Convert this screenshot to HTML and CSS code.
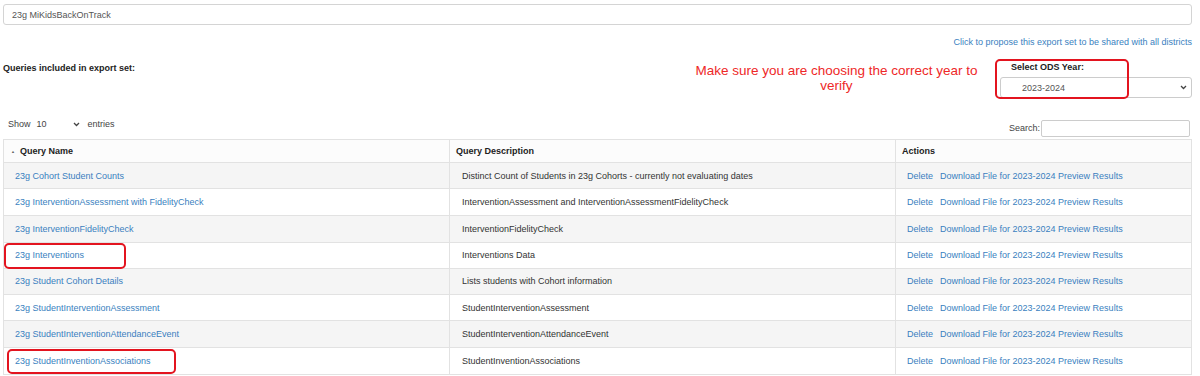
FILE: index.html
```html
<!DOCTYPE html>
<html lang="en">
<head>
    <meta charset="utf-8">
    <title>Export set</title>
    <link rel="stylesheet" href="styles.css">
</head>
<body>
    <div class="page">
        <div class="set-name">23g MiKidsBackOnTrack</div>

        <div class="share-row">
            <a href="#">Click to propose this export set to be shared with all districts</a>
        </div>

        <div class="options-row">
            <div class="included">Queries included in export set:</div>
            <div class="note">Make sure you are choosing the correct year to<br>verify</div>
            <div class="year-pick">
                <div class="year-label">Select ODS Year:</div>
                <div class="year-select">
                    <span>2023-2024</span>
                    <svg class="chev" width="7" height="5" viewBox="0 0 7 5"><path d="M1 1 L3.5 3.5 L6 1" fill="none" stroke="#444" stroke-width="1.3"/></svg>
                </div>
                <div class="mark mark-year"></div>
            </div>
        </div>

        <div class="table-tools">
            <div class="length">
                Show
                <span class="length-select">10
                    <svg class="chev" width="7" height="5" viewBox="0 0 7 5"><path d="M1 1 L3.5 3.5 L6 1" fill="none" stroke="#444" stroke-width="1.3"/></svg>
                </span>
                entries
            </div>
            <div class="search">Search:<span class="search-box"></span></div>
        </div>

        <table class="queries">
            <thead>
                <tr>
                    <th class="col-name"><span class="sort">&#9650;</span>Query Name</th>
                    <th class="col-desc">Query Description</th>
                    <th class="col-act">Actions</th>
                </tr>
            </thead>
            <tbody>
                <tr>
                    <td><a href="#">23g Cohort Student Counts</a></td>
                    <td>Distinct Count of Students in 23g Cohorts - currently not evaluating dates</td>
                    <td><a href="#" class="del">Delete</a><a href="#">Download File for 2023-2024</a> <a href="#">Preview Results</a></td>
                </tr>
                <tr>
                    <td><a href="#">23g InterventionAssessment with FidelityCheck</a></td>
                    <td>InterventionAssessment and InterventionAssessmentFidelityCheck</td>
                    <td><a href="#" class="del">Delete</a><a href="#">Download File for 2023-2024</a> <a href="#">Preview Results</a></td>
                </tr>
                <tr>
                    <td><a href="#">23g InterventionFidelityCheck</a></td>
                    <td>InterventionFidelityCheck</td>
                    <td><a href="#" class="del">Delete</a><a href="#">Download File for 2023-2024</a> <a href="#">Preview Results</a></td>
                </tr>
                <tr>
                    <td class="flagged"><a href="#">23g Interventions</a><div class="mark mark-row4"></div></td>
                    <td>Interventions Data</td>
                    <td><a href="#" class="del">Delete</a><a href="#">Download File for 2023-2024</a> <a href="#">Preview Results</a></td>
                </tr>
                <tr>
                    <td><a href="#">23g Student Cohort Details</a></td>
                    <td>Lists students with Cohort information</td>
                    <td><a href="#" class="del">Delete</a><a href="#">Download File for 2023-2024</a> <a href="#">Preview Results</a></td>
                </tr>
                <tr>
                    <td><a href="#">23g StudentInterventionAssessment</a></td>
                    <td>StudentInterventionAssessment</td>
                    <td><a href="#" class="del">Delete</a><a href="#">Download File for 2023-2024</a> <a href="#">Preview Results</a></td>
                </tr>
                <tr>
                    <td><a href="#">23g StudentInterventionAttendanceEvent</a></td>
                    <td>StudentInterventionAttendanceEvent</td>
                    <td><a href="#" class="del">Delete</a><a href="#">Download File for 2023-2024</a> <a href="#">Preview Results</a></td>
                </tr>
                <tr>
                    <td class="flagged"><a href="#">23g StudentInventionAssociations</a><div class="mark mark-row8"></div></td>
                    <td>StudentInventionAssociations</td>
                    <td><a href="#" class="del">Delete</a><a href="#">Download File for 2023-2024</a> <a href="#">Preview Results</a></td>
                </tr>
            </tbody>
        </table>
    </div>
</body>
</html>
```

FILE: styles.css
```css
/* Base */
body {margin: 0; font-family: "Liberation Sans", Arial, sans-serif; font-size: 9px; color: #333; background: #fff}
a {color: #3a7fc0; text-decoration: none}
.page {padding: 4px 8px 0 3px}

/* Export set name */
.set-name {height: 21px; line-height: 21px; border: 1px solid #d4d4d4; border-radius: 3px; padding: 0 8px; box-sizing: border-box; color: #555}

/* Share link */
.share-row {text-align: right; margin-top: 12px; line-height: 11px}

/* Options row */
.options-row {display: flex; align-items: flex-start; margin-top: 12px; height: 43px}
.included {font-weight: bold; width: 300px; padding-top: 3px; color: #222}
.note {flex: 1; text-align: center; color: #ee2828; font-size: 13.5px; line-height: 15px; padding-top: 3px; padding-left: 380px; padding-right: 10px}
.year-pick {position: relative; width: 192px; padding-top: 2px}
.year-label {font-weight: bold; padding-left: 11px; line-height: 11px; color: #222}
.year-select {margin-top: 4px; height: 21px; border: 1px solid #ccc; border-radius: 3px; box-sizing: border-box; display: flex; align-items: center; justify-content: space-between; padding: 0 4px 0 21px; color: #555}
.chev {display: inline-block}

/* Red highlight boxes */
.mark {position: absolute; border: 2.5px solid #e3141f; border-radius: 5px; pointer-events: none}
.mark-year {left: -5px; top: -1px; width: 130px; height: 36px}
.mark-row4 {left: 0; top: 0; width: 118px; height: 22px}
.mark-row8 {left: 3px; top: 1px; width: 165px; height: 21px}

/* Length and search */
.table-tools {display: flex; justify-content: space-between; align-items: center; margin-top: 11px; padding: 0 2px 0 5px; height: 20px}
.length {display: flex; align-items: center; gap: 4px; color: #444}
.length-select {display: inline-flex; align-items: center; gap: 26px; padding: 0 4px 0 2px}
.search {display: flex; align-items: center; gap: 1px; margin-top: 8px; color: #444}
.search-box {display: inline-block; width: 147px; height: 15px; border: 1px solid #ccc; border-radius: 2px}

/* Queries table */
.queries {width: 100%; border-collapse: collapse; margin-top: 5px; border: 1px solid #e2e2e2; table-layout: fixed}
.queries th, .queries td {border: 1px solid #e2e2e2; text-align: left; height: 25.25px; padding: 0 11px; vertical-align: middle; white-space: nowrap}
/* every fourth row is a pixel taller so the rows keep a 26.25px pitch */
.queries tbody tr:nth-child(4n+3) td {height: 26px}
.queries td:nth-child(2) {padding-left: 12px}
.queries th {font-weight: bold; height: 22px; padding-left: 6px; color: #222; background: #fcfcfc}
.queries th.col-name {width: 446px; padding-left: 7px; box-sizing: border-box}
.queries th.col-desc {width: 446px; box-sizing: border-box}
.queries .sort {font-size: 4px; color: #666; margin-right: 5px; position: relative; top: -1px}
.queries tbody tr:nth-child(odd) {background: #f5f5f5}
.queries td a.del {margin-right: 7px}
.queries td.flagged {position: relative}
```
